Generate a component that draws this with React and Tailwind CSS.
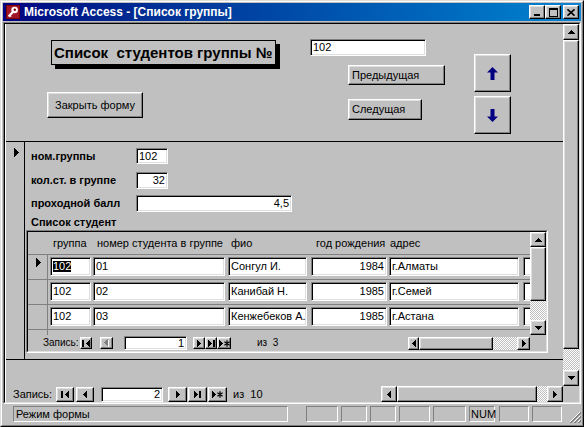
import React from "react";

const F = "font-['Liberation_Sans',Arial,sans-serif]";
const RAISED =
  "bg-[#c0c0c0] border border-t-white border-l-white border-r-black border-b-black shadow-[inset_-1px_-1px_0_#808080,inset_1px_1px_0_#dfdfdf]";
const SUNKEN =
  "bg-white border border-t-[#808080] border-l-[#808080] border-r-white border-b-white shadow-[inset_1px_1px_0_#000,inset_-1px_-1px_0_#dfdfdf]";
const PANEL = "border border-t-[#808080] border-l-[#808080] border-r-white border-b-white";
const CHECK =
  "bg-[image:repeating-conic-gradient(#c0c0c0_0_25%,#ffffff_0_50%)] bg-[length:2px_2px]";

function Svg({ w, h, children }) {
  return (
    <svg width={w} height={h} viewBox={`0 0 ${w} ${h}`} shapeRendering="crispEdges" className="block">
      {children}
    </svg>
  );
}

const P_UP = "M3 0h1v1h1v1h1v1h1v1H0V3h1V2h1V1h1z";
const P_DOWN = "M0 0h7v1H6v1H5v1H4v1H3V3H2V2H1V1H0z";
const P_LEFT = "M3 0h1v7H3V6H2V5H1V4H0V3h1V2h1V1h1z";
const P_RIGHT = "M0 0h1v1h1v1h1v1h1v1H3v1H2v1H1v1H0z";

function ArrowUp() {
  return <Svg w={7} h={4}><path d={P_UP} fill="#000" /></Svg>;
}
function ArrowDown() {
  return <Svg w={7} h={4}><path d={P_DOWN} fill="#000" /></Svg>;
}
function ArrowLeft() {
  return <Svg w={4} h={7}><path d={P_LEFT} fill="#000" /></Svg>;
}
function ArrowRight() {
  return <Svg w={4} h={7}><path d={P_RIGHT} fill="#000" /></Svg>;
}

function GFirst() {
  return (
    <Svg w={8} h={7}>
      <rect x="0" y="0" width="2" height="7" fill="#000" />
      <path d={P_LEFT} transform="translate(4 0)" fill="#000" />
    </Svg>
  );
}
function GPrev({ disabled }) {
  if (disabled)
    return (
      <Svg w={5} h={8}>
        <path d={P_LEFT} transform="translate(1 1)" fill="#fff" />
        <path d={P_LEFT} fill="#808080" />
      </Svg>
    );
  return <ArrowLeft />;
}
function GLast() {
  return (
    <Svg w={7} h={7}>
      <path d={P_RIGHT} fill="#000" />
      <rect x="5" y="0" width="2" height="7" fill="#000" />
    </Svg>
  );
}
function GNew() {
  return (
    <svg width="11" height="7" viewBox="0 0 11 7" className="block">
      <path d={P_RIGHT} fill="#000" shapeRendering="crispEdges" />
      <path d="M8 0.3v6.4M5.4 1.8l5.2 3.4M5.4 5.2l5.2-3.4" stroke="#000" strokeWidth="1.2" />
    </svg>
  );
}

function RecTri() {
  return (
    <Svg w={5} h={9}>
      <path d="M0 0h1v1h1v1h1v1h1v1h1v1H4v1H3v1H2v1H1v1H0z" fill="#000" />
    </Svg>
  );
}

function BigArrow({ up }) {
  return (
    <svg width="11" height="13" viewBox="0 0 11 13" className="block">
      {up ? (
        <polygon points="5.5,0 11,5.5 7.5,5.5 7.5,13 3.5,13 3.5,5.5 0,5.5" fill="#000080" />
      ) : (
        <polygon points="5.5,13 11,7.5 7.5,7.5 7.5,0 3.5,0 3.5,7.5 0,7.5" fill="#000080" />
      )}
    </svg>
  );
}

function AccessIcon() {
  return (
    <svg width="14" height="14" viewBox="0 0 14 14" className="block">
      <rect x="0" y="0" width="14" height="14" fill="#800000" />
      <rect x="1" y="1" width="12" height="12" fill="#a01828" />
      <circle cx="8.6" cy="5" r="3.3" fill="#fff" />
      <circle cx="8.8" cy="4.8" r="1.2" fill="#800000" />
      <path d="M6.6 7.2L2.6 11.6" stroke="#fff" strokeWidth="2.2" />
      <path d="M3.6 10.2l1.6 1.4" stroke="#fff" strokeWidth="1.2" />
    </svg>
  );
}

function CapBtn({ kind }) {
  return (
    <div className={`w-[16px] h-[14px] ${RAISED} flex items-center justify-center`}>
      {kind === "min" && (
        <Svg w={8} h={8}>
          <rect x="1" y="6" width="6" height="2" fill="#000" />
        </Svg>
      )}
      {kind === "max" && (
        <Svg w={9} h={9}>
          <path d="M0 0h9v9H0zM1 2v6h7V2z" fill="#000" fillRule="evenodd" />
        </Svg>
      )}
      {kind === "close" && (
        <svg width="8" height="7" viewBox="0 0 8 7" className="block">
          <path d="M0.5 0.3l7 6.4M7.5 0.3l-7 6.4" stroke="#000" strokeWidth="1.6" />
        </svg>
      )}
    </div>
  );
}

function SBtn({ cls, children }) {
  return <div className={`${cls} ${RAISED} shrink-0 flex items-center justify-center`}>{children}</div>;
}

function Box({ cls, right, children }) {
  return (
    <div
      className={`${cls} ${SUNKEN} shrink-0 flex items-center overflow-hidden whitespace-nowrap ${
        right ? "justify-end pr-[2px]" : "pl-[2px]"
      }`}
    >
      {children}
    </div>
  );
}

function DetailField({ mt, label, boxCls, value, right }) {
  return (
    <div className={`flex items-center pl-[5px] ${mt}`}>
      <div className="w-[105px] font-bold whitespace-nowrap">{label}</div>
      <Box cls={boxCls} right={right}>{value}</Box>
    </div>
  );
}

const rows = [
  { g: "102", n: "01", f: "Сонгул И.", y: "1984", a: "г.Алматы", sel: true },
  { g: "102", n: "02", f: "Канибай Н.", y: "1985", a: "г.Семей" },
  { g: "102", n: "03", f: "Кенжебеков А.", y: "1985", a: "г.Астана" },
];

function Subform() {
  return (
    <div className="mt-[1px] w-[522px] h-[123px] border border-t-[#808080] border-l-[#808080] border-r-white border-b-white">
      <div className="h-full border border-t-black border-l-black border-r-[#dfdfdf] border-b-[#dfdfdf] flex flex-col">
        <div className="h-[103px] shrink-0 flex">
          <div className="flex-1 overflow-hidden flex flex-col">
            <div className="h-[23px] shrink-0 border-b border-[#808080] flex items-center whitespace-nowrap">
              <span className="w-[22px] shrink-0" />
              <span className="w-[43px] shrink-0 pl-[3px]">группа</span>
              <span className="w-[135px] shrink-0 pl-[4px]">номер студента в группе</span>
              <span className="w-[83px] shrink-0 pl-[3px]">фио</span>
              <span className="w-[78px] shrink-0 pl-[5px]">год рождения</span>
              <span className="shrink-0 pl-[1px]">адрес</span>
            </div>
            {rows.map((r, i) => (
              <div key={i} className="h-[25px] shrink-0 flex border-b border-[#808080]">
                <div className="w-[20px] shrink-0 border-r border-[#808080] pt-[3px] pl-[8px]">
                  {r.sel && <RecTri />}
                </div>
                <div className="flex items-start pt-[2px]">
                  <Box cls="ml-[2px] w-[41px] h-[19px]">
                    {r.sel ? <span className="bg-black text-white">{r.g}</span> : r.g}
                  </Box>
                  <Box cls="ml-[2px] w-[132px] h-[19px]">{r.n}</Box>
                  <Box cls="ml-[3px] w-[79px] h-[19px]">{r.f}</Box>
                  <Box cls="ml-[4px] w-[76px] h-[19px]" right>{r.y}</Box>
                  <Box cls="ml-[2px] w-[130px] h-[19px]">{r.a}</Box>
                  <Box cls="ml-[4px] w-[30px] h-[19px]"></Box>
                </div>
              </div>
            ))}
            <div className="flex-1 flex">
              <div className="w-[20px] shrink-0 border-r border-[#808080]" />
            </div>
          </div>
          <div className="w-[16px] shrink-0 flex flex-col">
            <SBtn cls="h-[15px]"><ArrowUp /></SBtn>
            <SBtn cls="h-[54px]" />
            <div className={`flex-1 ${CHECK}`} />
            <SBtn cls="h-[15px]"><ArrowDown /></SBtn>
          </div>
        </div>
        <div className="flex-1 flex items-center pl-[15px] whitespace-nowrap text-[10px]">
          <span className="w-[37px] shrink-0">Запись:</span>
          <SBtn cls="w-[12px] h-[12px]"><GFirst /></SBtn>
          <SBtn cls="ml-[8px] w-[13px] h-[12px]"><GPrev disabled /></SBtn>
          <Box cls="ml-[11px] w-[63px] h-[14px] text-[11px]" right>1</Box>
          <SBtn cls="ml-[6px] w-[12px] h-[12px]"><ArrowRight /></SBtn>
          <SBtn cls="w-[12px] h-[12px]"><GLast /></SBtn>
          <SBtn cls="w-[14px] h-[12px]"><GNew /></SBtn>
          <span className="ml-[26px]">из&nbsp;&nbsp;3</span>
          <div className="ml-auto mr-[16px] flex h-[13px] w-[122px]">
            <SBtn cls="w-[11px] h-[13px]"><ArrowLeft /></SBtn>
            <SBtn cls="w-[74px] h-[13px]" />
            <div className={`flex-1 ${CHECK}`} />
            <SBtn cls="w-[13px] h-[13px]"><ArrowRight /></SBtn>
          </div>
        </div>
      </div>
    </div>
  );
}

export default function App() {
  return (
    <div
      className={`w-[584px] h-[427px] bg-[#c0c0c0] border border-t-[#dfdfdf] border-l-[#dfdfdf] border-r-black border-b-black text-[11px] leading-none text-black ${F} overflow-hidden select-none`}
    >
      <div className="h-full flex flex-col border border-t-white border-l-white border-r-[#808080] border-b-[#808080] p-px">
        {/* Title bar */}
        <div className="h-[18px] shrink-0 flex items-center bg-linear-to-r from-[#000080] to-[#1084d0] pl-[3px] pr-[2px]">
          <AccessIcon />
          <span className="ml-[4px] text-white font-bold text-[12px] whitespace-nowrap">
            Microsoft Access - [Список группы]
          </span>
          <div className="ml-auto flex items-center">
            <CapBtn kind="min" />
            <CapBtn kind="max" />
            <div className="w-[2px]" />
            <CapBtn kind="close" />
          </div>
        </div>
        <div className="h-px shrink-0" />

        {/* MDI client */}
        <div className="h-[382px] shrink-0 border border-t-[#808080] border-l-[#808080] border-r-white border-b-white">
          <div className="h-full border border-t-black border-l-black border-r-[#dfdfdf] border-b-[#dfdfdf] flex flex-col">
            <div className="flex-1 flex flex-col border-l border-white">
              <div className="h-[362px] shrink-0 flex">
                {/* Form */}
                <div className="flex-1 flex flex-col">
                  {/* Header */}
                  <div className="h-[118px] shrink-0 border-b border-black flex pl-[41px]">
                    <div className="w-[263px] shrink-0 flex flex-col items-start">
                      <div className="mt-[16px] ml-[4px] w-[225px] h-[25px] border border-black shadow-[4px_4px_0_#000] flex items-center pl-[2px] text-[15px] font-bold whitespace-pre">
                        Список  студентов группы №
                      </div>
                      <div className={`mt-[27px] w-[96px] h-[26px] ${RAISED} flex items-center justify-center`}>
                        Закрыть форму
                      </div>
                    </div>
                    <div className="w-[164px] shrink-0 flex flex-col items-start">
                      <Box cls="mt-[15px] w-[116px] h-[17px]">102</Box>
                      <div className={`mt-[9px] ml-[38px] w-[97px] h-[20px] ${RAISED} flex items-center pl-[3px]`}>
                        Предыдущая
                      </div>
                      <div className={`mt-[14px] ml-[38px] w-[74px] h-[21px] ${RAISED} flex items-center pl-[3px]`}>
                        Следущая
                      </div>
                    </div>
                    <div className="flex flex-col pt-[30px] gap-[4px]">
                      <div className={`w-[37px] h-[38px] ${RAISED} flex items-center justify-center`}>
                        <BigArrow up />
                      </div>
                      <div className={`w-[37px] h-[38px] ${RAISED} flex items-center justify-center`}>
                        <BigArrow />
                      </div>
                    </div>
                  </div>

                  {/* Detail */}
                  <div className="h-[218px] shrink-0 border-b border-black flex">
                    <div className="w-[19px] shrink-0 border-r border-black pt-[6px] pl-[8px]">
                      <RecTri />
                    </div>
                    <div className="flex-1 flex flex-col items-start pl-[1px]">
                      <DetailField mt="mt-[6px]" label="ном.группы" boxCls="w-[32px] h-[16px]" value="102" />
                      <DetailField mt="mt-[8px]" label="кол.ст. в группе" boxCls="w-[32px] h-[17px]" value="32" right />
                      <DetailField mt="mt-[6px]" label="проходной балл" boxCls="w-[156px] h-[17px]" value="4,5" right />
                      <div className="mt-[3px] h-[14px] pl-[5px] flex items-center font-bold whitespace-nowrap">
                        Список студент
                      </div>
                      <Subform />
                    </div>
                  </div>
                  <div className="flex-1" />
                </div>

                {/* Vertical scrollbar */}
                <div className="w-[16px] shrink-0 flex flex-col">
                  <SBtn cls="h-[16px]"><ArrowUp /></SBtn>
                  <SBtn cls="h-[309px]" />
                  <div className={`flex-1 ${CHECK}`} />
                  <SBtn cls="h-[16px]"><ArrowDown /></SBtn>
                </div>
              </div>

              {/* Bottom nav + hscroll */}
              <div className="flex-1 flex items-center pl-[7px] whitespace-nowrap">
                <span className="w-[43px] shrink-0">Запись:</span>
                <SBtn cls="w-[18px] h-[15px]"><GFirst /></SBtn>
                <SBtn cls="ml-[2px] w-[18px] h-[15px]"><ArrowLeft /></SBtn>
                <Box cls="ml-[7px] w-[62px] h-[15px]" right>2</Box>
                <SBtn cls="ml-[5px] w-[19px] h-[15px]"><ArrowRight /></SBtn>
                <SBtn cls="ml-[1px] w-[19px] h-[15px]"><GLast /></SBtn>
                <SBtn cls="ml-[1px] w-[19px] h-[15px]"><GNew /></SBtn>
                <span className="ml-[6px]">из&nbsp;&nbsp;10</span>
                <div className="ml-auto flex h-full w-[182px]">
                  <SBtn cls="w-[16px] h-full"><ArrowLeft /></SBtn>
                  <SBtn cls="w-[140px] h-full" />
                  <div className={`flex-1 ${CHECK}`} />
                  <SBtn cls="w-[16px] h-full"><ArrowRight /></SBtn>
                </div>
                <div className="w-[16px] shrink-0" />
              </div>
            </div>
          </div>
        </div>

        {/* Status bar */}
        <div className="flex-1 flex items-start pt-[2px] pl-[10px] whitespace-nowrap">
          <div className={`w-[275px] h-[16px] ${PANEL} flex items-center pl-[2px]`}>Режим формы</div>
          <div className={`ml-[18px] w-[32px] h-[16px] ${PANEL}`} />
          <div className={`ml-[3px] w-[26px] h-[16px] ${PANEL}`} />
          <div className={`ml-[3px] w-[26px] h-[16px] ${PANEL}`} />
          <div className={`ml-[3px] w-[31px] h-[16px] ${PANEL}`} />
          <div className={`ml-[3px] w-[33px] h-[16px] ${PANEL}`} />
          <div className={`ml-[3px] w-[26px] h-[16px] ${PANEL} flex items-center pl-[1px]`}>NUM</div>
          <div className={`ml-[4px] w-[30px] h-[16px] ${PANEL}`} />
          <div className={`ml-[3px] w-[30px] h-[16px] ${PANEL}`} />
          <div className="ml-auto self-end mb-[1px]">
            <svg width="12" height="12" viewBox="0 0 12 12" className="block">
              <path d="M11 1L1 11M11 5L5 11M11 9L9 11" stroke="#fff" strokeWidth="1" />
              <path d="M12 1L1 12M12 2L2 12M12 5L5 12M12 6L6 12M12 9L9 12M12 10L10 12" stroke="#808080" strokeWidth="1" />
            </svg>
          </div>
        </div>
      </div>
    </div>
  );
}
